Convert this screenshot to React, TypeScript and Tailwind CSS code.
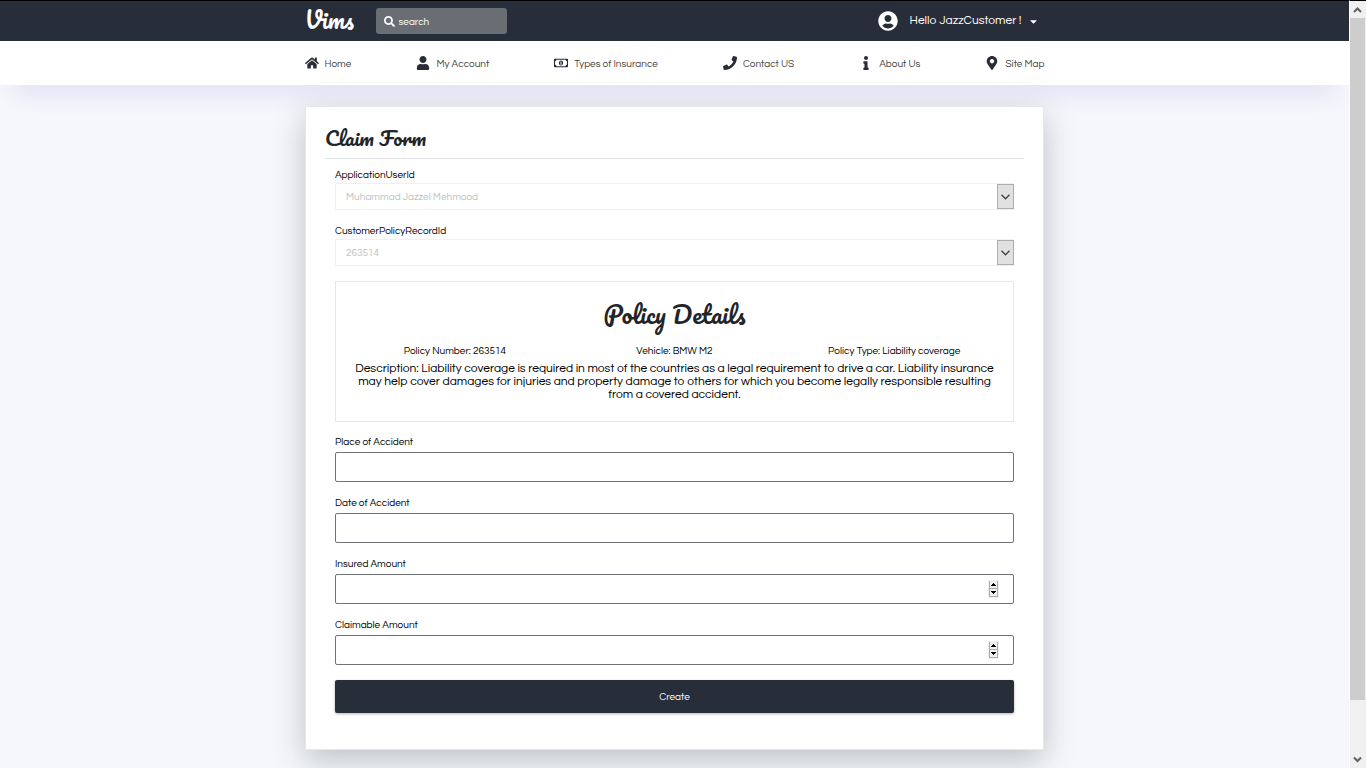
import type { ReactNode } from "react";
import {
  FaCaretDown,
  FaHome,
  FaInfo,
  FaMapMarkerAlt,
  FaPhone,
  FaRegMoneyBillAlt,
  FaSearch,
  FaUser,
  FaUserCircle,
} from "react-icons/fa";

const links = [
  { label: "Home", Icon: FaHome },
  { label: "My Account", Icon: FaUser },
  { label: "Types of Insurance", Icon: FaRegMoneyBillAlt },
  { label: "Contact US", Icon: FaPhone },
  { label: "About Us", Icon: FaInfo },
  { label: "Site Map", Icon: FaMapMarkerAlt },
];

function Header() {
  return (
    <header className="border-t border-black bg-[#282d3a] text-white">
      <div className="mx-auto flex h-10 max-w-[740px] items-center pr-[6px]">
        <a href="#" className="w-[71px] pb-1 font-['Pacifico',cursive] text-[23px] leading-8">
          Vims
        </a>
        <label className="flex h-[26px] w-[131px] items-center gap-1 rounded-[3px] bg-[#696d74] px-2">
          <FaSearch size={11} className="shrink-0" />
          <input
            type="search"
            aria-label="search"
            placeholder="search"
            className="w-full min-w-0 bg-transparent pt-[2px] text-[10px] text-white outline-none placeholder:text-white"
          />
        </label>
        <button type="button" className="ml-auto flex items-center text-[12px]">
          <FaUserCircle size={20} />
          <span className="ml-3">Hello JazzCustomer !</span>
          <FaCaretDown size={11} className="ml-[6px]" />
        </button>
      </div>
    </header>
  );
}

function Nav() {
  return (
    <nav className="bg-white shadow-[0_20px_25px_-15px_#d4d2f0]">
      <ul className="mx-auto flex h-11 max-w-[740px] items-center justify-between">
        {links.map(({ label, Icon }) => (
          <li key={label}>
            <a href="#" className="flex items-center gap-[6px] text-[10px] text-[#444]">
              <Icon className="h-[14px] w-auto text-[#282d3a]" />
              <span className="pt-[2px]">{label}</span>
            </a>
          </li>
        ))}
      </ul>
    </nav>
  );
}

function LockedSelect({ id, label, value }: { id: string; label: string; value: string }) {
  return (
    <div>
      <label htmlFor={id} className="block pt-[2px] text-[10px] leading-[15px]">
        {label}
      </label>
      <div className="relative">
        <select
          id={id}
          disabled
          className="block h-[27px] w-full appearance-none border border-[#f0f0f0] bg-white px-[10px] pt-[2px] text-[10px] text-[#c0c0c0] opacity-100"
        >
          <option>{value}</option>
        </select>
        <span className="pointer-events-none absolute inset-y-px right-0 flex w-[17px] items-center justify-center border border-[#adadad] bg-[#e1e1e1]">
          <svg width="9" height="6" viewBox="0 0 9 6" fill="none" stroke="#404040" strokeWidth="1.3">
            <path d="M.5.8 4.5 4.8 8.5.8" />
          </svg>
        </span>
      </div>
    </div>
  );
}

function Field({ id, label, type = "text", children }: { id: string; label: string; type?: string; children?: ReactNode }) {
  return (
    <div>
      <label htmlFor={id} className="block pt-px text-[10px] leading-[19px]">
        {label}
      </label>
      <div className="relative">
        <input
          id={id}
          type={type}
          className="block h-[30px] w-full appearance-none rounded-[2px] border border-[#6f7277] bg-white px-[10px] text-[10px] [-moz-appearance:textfield] [&::-webkit-inner-spin-button]:appearance-none"
        />
        {children}
      </div>
    </div>
  );
}

function Spinner() {
  return (
    <svg
      className="pointer-events-none absolute top-[6px] right-[15px]"
      width="11"
      height="18"
      viewBox="0 0 11 18"
      shapeRendering="crispEdges"
    >
      <path fill="#f0f0f0" d="M0 0h11v18H0z" />
      <path fill="#adadad" d="M1 1h1v15H1zM9 1h1v15H9zM1 8h9v1H1zM1 16h9v1H1z" />
      <path fill="#000" d="M5 3h1v1H5zM4 4h3v1H4zM3 5h5v1H3zM3 11h5v1H3zM4 12h3v1H4zM5 13h1v1H5z" />
    </svg>
  );
}

function PolicyDetails() {
  return (
    <section className="mt-[15px] border border-[#e5e7e9] px-[9px] pt-[10px] pb-5 text-center">
      <h2 className="font-['Pacifico',cursive] text-[24px] leading-[44px] text-[#212529]">Policy Details</h2>
      <div className="mt-[6px] grid grid-cols-3 text-[10px] leading-[18px]">
        <span>Policy Number: 263514</span>
        <span>Vehicle: BMW M2</span>
        <span>Policy Type: Liability coverage</span>
      </div>
      <p className="mt-[2px] px-2 text-[12px] leading-[13px]">
        Description: Liability coverage is required in most of the countries as a legal requirement to drive a car.
        Liability insurance may help cover damages for injuries and property damage to others for which you become
        legally responsible resulting from a covered accident.
      </p>
    </section>
  );
}

function ClaimForm() {
  return (
    <main className="mx-auto mt-[21px] max-w-[739px] border border-[#e5e7e9] bg-white px-[19px] pb-9 shadow-[0_10px_30px_rgba(33,37,41,0.25)]">
      <h1 className="border-b border-[#dfe1e3] pt-[11px] font-['Pacifico',cursive] text-[20px] leading-[40px] text-[#212529]">
        Claim Form
      </h1>
      <form className="px-[10px] pt-[7px]">
        <div className="flex flex-col gap-3">
          <LockedSelect id="user" label="ApplicationUserId" value="Muhammad Jazzel Mehmood" />
          <LockedSelect id="policy" label="CustomerPolicyRecordId" value="263514" />
        </div>
        <PolicyDetails />
        <div className="mt-[10px] flex flex-col gap-[11px]">
          <Field id="place" label="Place of Accident" />
          <Field id="date" label="Date of Accident" />
          <Field id="insured" label="Insured Amount" type="number">
            <Spinner />
          </Field>
          <Field id="claimable" label="Claimable Amount" type="number">
            <Spinner />
          </Field>
        </div>
        <button
          type="button"
          className="mt-[15px] h-[33px] w-full rounded-[2px] bg-[#282d3a] pt-[2px] text-[10px] text-white shadow-[0_1px_3px_rgba(0,0,0,0.3)]"
        >
          Create
        </button>
      </form>
    </main>
  );
}

function ScrollBar() {
  return (
    <div
      aria-hidden="true"
      className="flex w-[17px] shrink-0 flex-col border-t border-l border-t-black border-l-white bg-[#f0f0f0] pr-px"
    >
      <svg width="15" height="17" viewBox="0 0 15 17" fill="none" stroke="#606060" strokeWidth="2">
        <path d="M4 11 7.5 7.5 11 11" />
      </svg>
      <div className="flex-1">
        <div className="h-[93%] bg-[#cdcdcd]" />
      </div>
      <svg width="15" height="17" viewBox="0 0 15 17" fill="none" stroke="#606060" strokeWidth="2">
        <path d="M4 6.5 7.5 10 11 6.5" />
      </svg>
    </div>
  );
}

export default function App() {
  return (
    <div className="flex h-screen overflow-hidden bg-[#f5f7fb] font-['Century_Gothic','Questrial','Didact_Gothic','Lato',sans-serif] text-black">
      <div className="min-w-0 flex-1 overflow-hidden">
        <Header />
        <Nav />
        <ClaimForm />
      </div>
      <ScrollBar />
    </div>
  );
}
